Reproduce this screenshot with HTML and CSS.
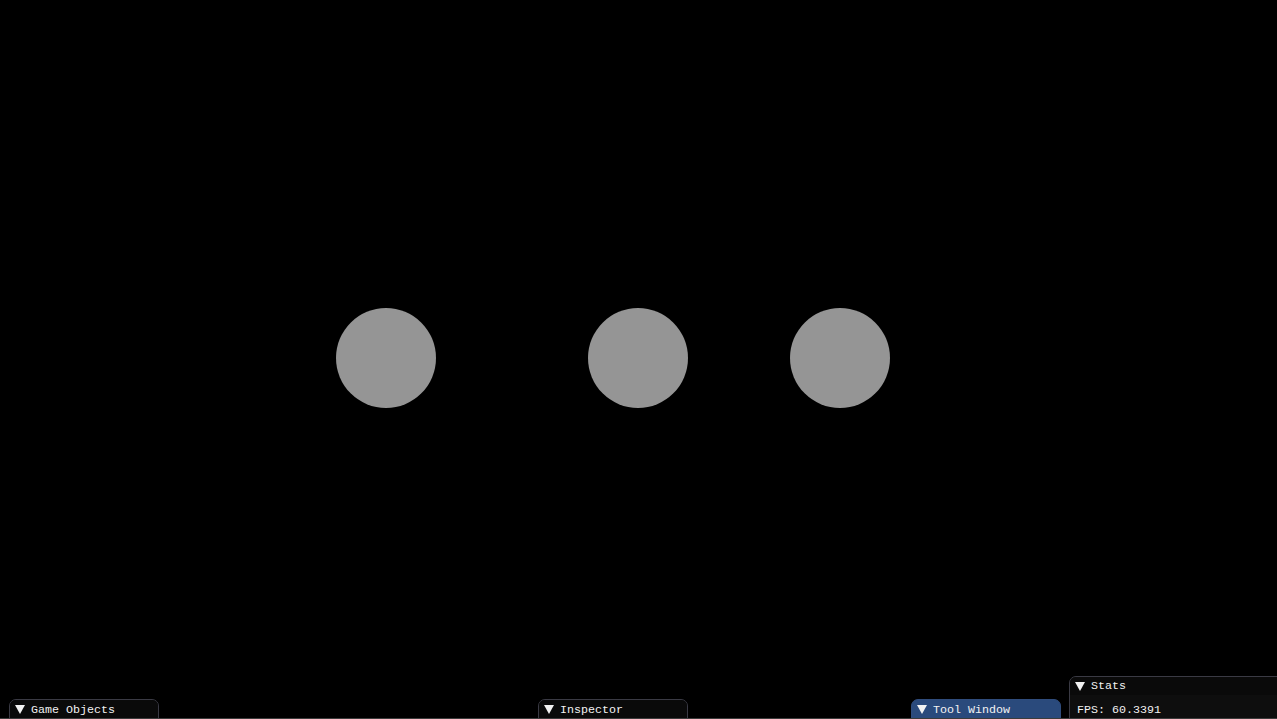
FILE: index.html
```html
<!DOCTYPE html>
<html>
<head>
<meta charset="utf-8">
<link rel="stylesheet" href="styles.css">
</head>
<body>
<div class="scene">
  <div class="ball" style="left:336px;top:308px"></div>
  <div class="ball" style="left:588px;top:308px"></div>
  <div class="ball" style="left:790px;top:308px"></div>

  <div class="win collapsed" style="left:9px;top:699px;width:150px">
    <div class="title"><span class="arrow"></span><span class="label">Game Objects</span></div>
  </div>
  <div class="win collapsed" style="left:538px;top:699px;width:150px">
    <div class="title"><span class="arrow"></span><span class="label">Inspector</span></div>
  </div>
  <div class="win collapsed active" style="left:911px;top:699px;width:150px">
    <div class="title"><span class="arrow"></span><span class="label">Tool Window</span></div>
  </div>
  <div class="win stats" style="left:1069px;top:676px;width:230px">
    <div class="title"><span class="arrow"></span><span class="label">Stats</span></div>
    <div class="body">
      <div class="line">FPS: 60.3391</div>
      <div class="line">Frame time: 16.57 ms</div>
    </div>
  </div>
  <div class="bottomline"></div>
</div>
</body>
</html>
```
FILE: styles.css
```css
html, body {
  margin: 0;
  padding: 0;
  background: #000;
  overflow: hidden;
}
.scene {
  position: relative;
  width: 1277px;
  height: 719px;
  background: #000;
  overflow: hidden;
  font-family: "Liberation Mono", "DejaVu Sans Mono", monospace;
  font-size: 11.67px;
  color: #f2f2f2;
}
.ball {
  position: absolute;
  width: 100px;
  height: 100px;
  border-radius: 50%;
  background: #959595;
}
.win {
  position: absolute;
  box-sizing: border-box;
  border: 1px solid #3a3a44;
  border-radius: 7px 7px 0 0;
  background: #0e0e0e;
  overflow: hidden;
}
.win.collapsed {
  height: 24px;
  background: #0a0a0a;
}
.win.collapsed .title {
  height: 18px;
  line-height: 18px;
}
.win.collapsed .label {
  padding-top: 2px;
}
.win.active {
  background: #2a4a7c;
  border-color: #2f4c7c;
}
.title {
  display: flex;
  align-items: center;
  height: 18px;
  padding-left: 5px;
  gap: 6px;
  background: #0a0a0a;
  line-height: 18px;
}
.win.active .title {
  background: #2a4a7c;
}
.arrow {
  width: 0;
  height: 0;
  border-left: 5px solid transparent;
  border-right: 5px solid transparent;
  border-top: 9px solid #f2f2f2;
}
.body {
  padding: 9px 7px 7px;
  background: #0e0e0e;
}
.line {
  line-height: 13px;
  height: 13px;
}
.bottomline {
  position: absolute;
  left: 0;
  right: 0;
  bottom: 0;
  height: 1px;
  background: #3c3c3c;
}
```
